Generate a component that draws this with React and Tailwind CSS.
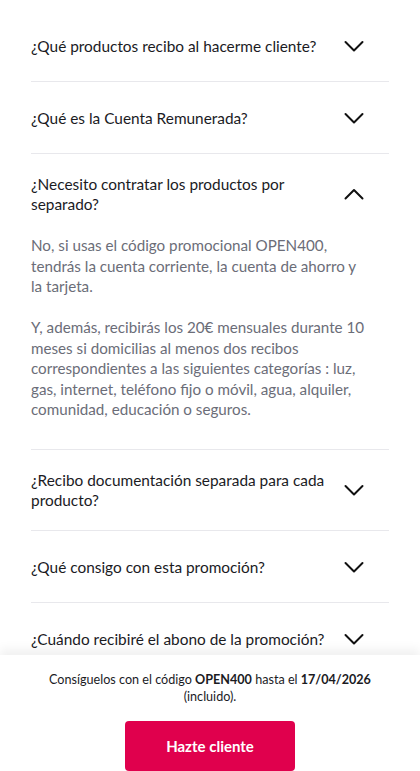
import React from "react";

const Chevron = ({ up }) => (
  <svg width="24" height="24" viewBox="0 0 24 24" fill="none" className="shrink-0">
    {up ? (
      <path d="M3.5 16.5 L12 8 L20.5 16.5" stroke="#111" strokeWidth="2" strokeLinecap="round" strokeLinejoin="round" />
    ) : (
      <path d="M3.5 8 L12 16.5 L20.5 8" stroke="#111" strokeWidth="2" strokeLinecap="round" strokeLinejoin="round" />
    )}
  </svg>
);

const Row = ({ q, open, children }) => (
  <div className="border-b border-[#e8e8ec]">
    <div className="flex items-center min-h-[71px] py-[20px]">
      <div className="flex-1 text-[15.4px] leading-[20px] text-[#1b1b1f] pr-2 max-w-[306px]">{q}</div>
      <div className="ml-auto mr-[23px] flex items-center">
        <Chevron up={open} />
      </div>
    </div>
    {children}
  </div>
);

export default function App() {
  return (
    <div className="relative w-[420px] h-[771px] overflow-hidden bg-white" style={{ fontFamily: "Lato, 'Noto Sans', sans-serif" }}>
      <div className="px-[31px] pt-[10px]">
        <Row q="¿Qué productos recibo al hacerme cliente?" />
        <Row q="¿Qué es la Cuenta Remunerada?" />
        <Row q="¿Necesito contratar los productos por separado?" open>
          <div className="mt-[1px] text-[15.2px] leading-[20.5px] text-[#6b6d78] pb-[29.5px] pr-[23px]">
            <p>No, si usas el código promocional OPEN400, tendrás la cuenta corriente, la cuenta de ahorro y la tarjeta.</p>
            <p className="mt-[20.5px]">Y, además, recibirás los 20€ mensuales durante 10 meses si domicilias al menos dos recibos correspondientes a las siguientes categorías : luz, gas, internet, teléfono fijo o móvil, agua, alquiler, comunidad, educación o seguros.</p>
          </div>
        </Row>
        <Row q="¿Recibo documentación separada para cada producto?" />
        <Row q="¿Qué consigo con esta promoción?" />
        <Row q="¿Cuándo recibiré el abono de la promoción?" />
      </div>
      <div className="absolute left-0 right-0 top-[655px] h-[130px] bg-white shadow-[0_-6px_10px_rgba(0,0,0,0.06)] flex flex-col items-center pt-[16px]">
        <p className="text-[12.6px] leading-[17px] text-[#1b1b1f] text-center px-[40px]">
          Consíguelos con el código <b>OPEN400</b> hasta el <b>17/04/2026</b> (incluido).
        </p>
        <button className="mt-[16px] w-[170px] h-[50px] rounded-[4px] bg-[#e0004d] text-white font-bold text-[15px]">
          Hazte cliente
        </button>
      </div>
    </div>
  );
}
